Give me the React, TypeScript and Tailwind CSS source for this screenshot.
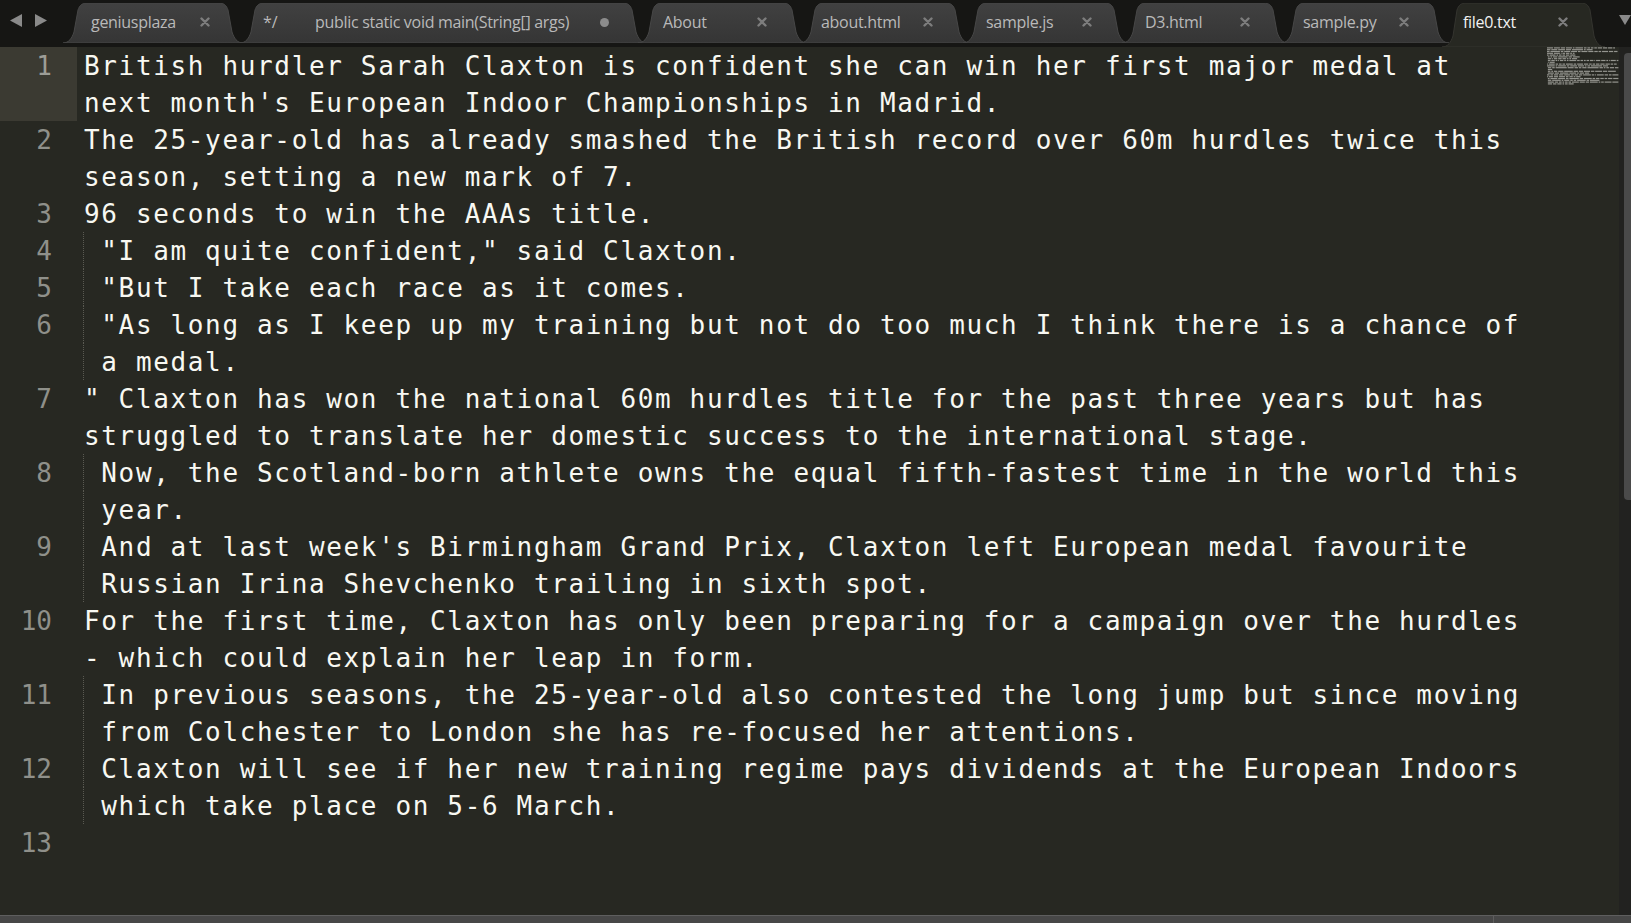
import React from "react";

type Row = { n?: number; t: string; guide?: boolean; active?: boolean };

const rows: Row[] = [
  { n: 1, t: "British hurdler Sarah Claxton is confident she can win her first major medal at", active: true },
  { t: "next month's European Indoor Championships in Madrid.", active: true },
  { n: 2, t: "The 25-year-old has already smashed the British record over 60m hurdles twice this" },
  { t: "season, setting a new mark of 7." },
  { n: 3, t: "96 seconds to win the AAAs title." },
  { n: 4, t: ' "I am quite confident," said Claxton.', guide: true },
  { n: 5, t: ' "But I take each race as it comes.', guide: true },
  { n: 6, t: ' "As long as I keep up my training but not do too much I think there is a chance of', guide: true },
  { t: " a medal.", guide: true },
  { n: 7, t: '" Claxton has won the national 60m hurdles title for the past three years but has' },
  { t: "struggled to translate her domestic success to the international stage." },
  { n: 8, t: " Now, the Scotland-born athlete owns the equal fifth-fastest time in the world this", guide: true },
  { t: " year.", guide: true },
  { n: 9, t: " And at last week's Birmingham Grand Prix, Claxton left European medal favourite", guide: true },
  { t: " Russian Irina Shevchenko trailing in sixth spot.", guide: true },
  { n: 10, t: "For the first time, Claxton has only been preparing for a campaign over the hurdles" },
  { t: "- which could explain her leap in form." },
  { n: 11, t: " In previous seasons, the 25-year-old also contested the long jump but since moving", guide: true },
  { t: " from Colchester to London she has re-focused her attentions.", guide: true },
  { n: 12, t: " Claxton will see if her new training regime pays dividends at the European Indoors", guide: true },
  { t: " which take place on 5-6 March.", guide: true },
  { n: 13, t: "" },
];

type Tab = {
  label: string;
  pre?: string;
  w: number;
  cls: string;
  textCls: string;
  active?: boolean;
  dirty?: boolean;
};

const tabs: Tab[] = [
  { label: "geniusplaza", w: 180, cls: "w-[180px]", textCls: "pl-[28px] w-[137px]" },
  { label: "public static void main(String[] args)", pre: "*/", w: 407, cls: "w-[407px] -ml-[3px]", textCls: "pl-[23px] w-[360px]", dirty: true },
  { label: "About", w: 169, cls: "w-[169px] -ml-[9px]", textCls: "pl-[25px] w-[119px]" },
  { label: "about.html", w: 170, cls: "w-[170px] -ml-[7px]", textCls: "pl-[21px] w-[123px]" },
  { label: "sample.js", w: 166, cls: "w-[166px] -ml-[7px]", textCls: "pl-[23px] w-[119px]" },
  { label: "D3.html", w: 166, cls: "w-[166px] -ml-[7px]", textCls: "pl-[23px] w-[118px]" },
  { label: "sample.py", w: 168, cls: "w-[168px] -ml-[7px]", textCls: "pl-[22px] w-[118px]" },
  { label: "file0.txt", w: 163, cls: "w-[163px] -ml-[7px]", textCls: "pl-[21px] w-[116px]", active: true },
];

function tabPath(W: number, H: number) {
  return `M0 ${H} C6 ${H} 9 ${H - 5} 11 ${H - 11} L15 7 C16.5 2.5 19 0 24 0 L${W - 24} 0 C${W - 19} 0 ${W - 16.5} 2.5 ${W - 15} 7 L${W - 11} ${H - 11} C${W - 9} ${H - 5} ${W - 6} ${H} ${W} ${H} Z`;
}

function CloseX() {
  return (
    <svg width="10" height="10" viewBox="0 0 10 10" className="shrink-0">
      <path d="M1.5 1.5 L8.5 8.5 M8.5 1.5 L1.5 8.5" stroke="#7d7d7d" strokeWidth="2.4" strokeLinecap="round" />
    </svg>
  );
}

function TabItem({ tab }: { tab: Tab }) {
  const H = tab.active ? 44 : 40;
  return (
    <div className={`relative shrink-0 ${tab.cls} ${tab.active ? "h-[44px] z-10" : "h-[40px]"}`}>
      <svg className="absolute inset-0" width={tab.w} height={H} viewBox={`0 0 ${tab.w} ${H}`}>
        <defs>
          <linearGradient id="tabg" x1="0" y1="0" x2="0" y2="1">
            <stop offset="0" stopColor="#414141" />
            <stop offset="1" stopColor="#353535" />
          </linearGradient>
        </defs>
        <path
          d={tabPath(tab.w, H)}
          fill={tab.active ? "#272822" : "url(#tabg)"}
          stroke={tab.active ? "#34342f" : "#474747"}
          strokeWidth="1"
        />
      </svg>
      <div
        className={`relative flex items-center pt-[9px] h-[29px] text-[16px] leading-[20px] ${
          tab.active ? "text-[#f2f2f2]" : "text-[#b9b9b9]"
        }`}
        style={{ fontFamily: '"Open Sans", "Noto Sans", sans-serif' }}
      >
        <div className={`flex items-center shrink-0 whitespace-pre ${tab.textCls}`}>
          {tab.pre ? <span className="w-[52px] shrink-0">{tab.pre}</span> : null}
          <span className="tracking-[-0.3px]">{tab.label}</span>
        </div>
        {tab.dirty ? (
          <div className="w-[9px] h-[9px] rounded-full bg-[#8c8c8c] shrink-0" />
        ) : (
          <CloseX />
        )}
      </div>
    </div>
  );
}

function TabBar() {
  return (
    <div className="h-[47px] bg-[#161614] flex items-start shrink-0 relative">
      <div className="w-[63px] h-[40px] flex items-center shrink-0 pl-[10px] gap-[13px]">
        <svg width="12" height="13" viewBox="0 0 12 13">
          <path d="M12 0 L0 6.5 L12 13 Z" fill="#8a8a8a" />
        </svg>
        <svg width="12" height="13" viewBox="0 0 12 13">
          <path d="M0 0 L12 6.5 L0 13 Z" fill="#8a8a8a" />
        </svg>
      </div>
      <div className="flex items-start pt-[3px]">
        {tabs.map((t) => (
          <TabItem key={t.label} tab={t} />
        ))}
      </div>
      <div className="flex-1 h-[40px] flex items-center justify-end">
        <svg width="12" height="10" viewBox="0 0 12 10">
          <path d="M0 0 L12 0 L6 10 Z" fill="#8a8a8a" />
        </svg>
      </div>
    </div>
  );
}

function Minimap() {
  const cw = 0.86;
  const rh = 1.8;
  const rects: React.ReactNode[] = [];
  rows.forEach((r, i) => {
    const re = /\S+/g;
    let m: RegExpExecArray | null;
    while ((m = re.exec(r.t)) !== null) {
      rects.push(
        <rect
          key={`${i}-${m.index}`}
          x={m.index * cw}
          y={i * rh + 0.3}
          width={m[0].length * cw}
          height={1.2}
          fill="#a8a8a2"
          opacity={0.85}
        />
      );
    }
  });
  return (
    <div className="w-[72px] shrink-0 overflow-hidden">
      <svg width="72" height="42" viewBox="0 0 72 42">
        {rects}
      </svg>
    </div>
  );
}

export default function App() {
  const mono = '"DejaVu Sans Mono", "Liberation Mono", monospace';
  return (
    <div className="w-[1631px] h-[923px] flex flex-col bg-[#272822] overflow-hidden">
      <TabBar />
      <div className="flex flex-1 min-h-0">
        <div className="flex-1 flex flex-col" style={{ fontFamily: mono }}>
          {rows.map((r, i) => (
            <div key={i} className="flex h-[37px] shrink-0">
              <div
                className={`w-[77px] shrink-0 pr-[25px] text-right text-[26px] leading-[38px] ${
                  r.active ? "bg-[#3b3a32] text-[#9d9d97]" : "text-[#8f908a]"
                }`}
              >
                {r.n ?? ""}
              </div>
              <div
                className={`flex-1 whitespace-pre text-[26px] leading-[38px] tracking-[1.65px] text-[#f8f8f2] ${
                  r.guide ? "ml-[6px] border-l border-dotted border-[#5a5a52]" : "pl-[7px]"
                }`}
              >
                {r.t}
              </div>
            </div>
          ))}
        </div>
        <Minimap />
        <div className="w-[12px] shrink-0 bg-[#222220] pt-[6px] pl-[5px]">
          <div className="h-[447px] w-[7px] rounded-l-[4px] bg-[#4a4a4a]" />
        </div>
      </div>
      <div className="h-[8px] shrink-0 flex bg-[#474747] border-t border-[#5e5e5e]">
        <div className="w-[1494px] h-full border-r border-[#5e5e5e]" />
      </div>
    </div>
  );
}
